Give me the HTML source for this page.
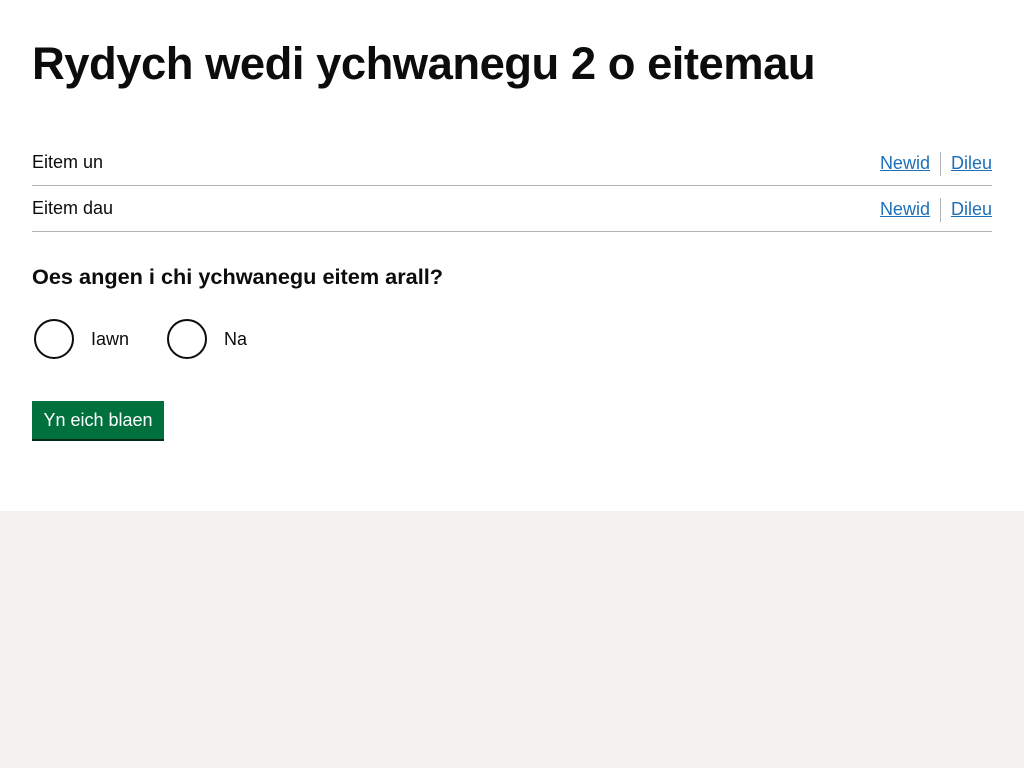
<!DOCTYPE html>
<html><head><meta charset="utf-8"><style>
body{margin:0;background:#f3f2f1;font-family:"Liberation Sans",Arial,sans-serif;color:#0b0c0c}
.main{background:#fff;height:511px;position:relative}
h1{position:absolute;left:32px;top:35px;margin:0;font-size:45.4px;font-weight:bold;letter-spacing:-0.5px;line-height:58px}
.row{position:absolute;left:32px;width:960px;height:45px;border-bottom:1px solid #b1b4b6;font-size:18px}
.row .n{position:absolute;left:0;top:12px}
.row .a{position:absolute;right:0;top:12px}
.a a{color:#1d70b8;text-decoration:underline}
.sep{display:inline-block;width:1px;height:24px;background:#b1b4b6;vertical-align:middle;margin:0 10px}
h2{position:absolute;left:32px;top:262px;margin:0;font-size:21.7px;font-weight:bold;line-height:30px}
.r{position:absolute;top:319px;width:36px;height:36px;border:2px solid #0b0c0c;border-radius:50%}
.l{position:absolute;top:329px;font-size:18px}
.btn{position:absolute;left:32px;top:401px;width:132px;height:38px;background:#00703c;box-shadow:0 2px 0 #002d18;color:#fff;font-size:18px;line-height:39px;text-align:center}
</style></head><body><div class="main">
<h1>Rydych wedi ychwanegu 2 o eitemau</h1>
<div class="row" style="top:140px"><span class="n">Eitem un</span><span class="a"><a>Newid</a><span class="sep"></span><a>Dileu</a></span></div>
<div class="row" style="top:186px"><span class="n">Eitem dau</span><span class="a"><a>Newid</a><span class="sep"></span><a>Dileu</a></span></div>
<h2>Oes angen i chi ychwanegu eitem arall?</h2>
<div class="r" style="left:34px"></div><span class="l" style="left:91px">Iawn</span>
<div class="r" style="left:167px"></div><span class="l" style="left:224px">Na</span>
<div class="btn">Yn eich blaen</div>
</div></body></html>
